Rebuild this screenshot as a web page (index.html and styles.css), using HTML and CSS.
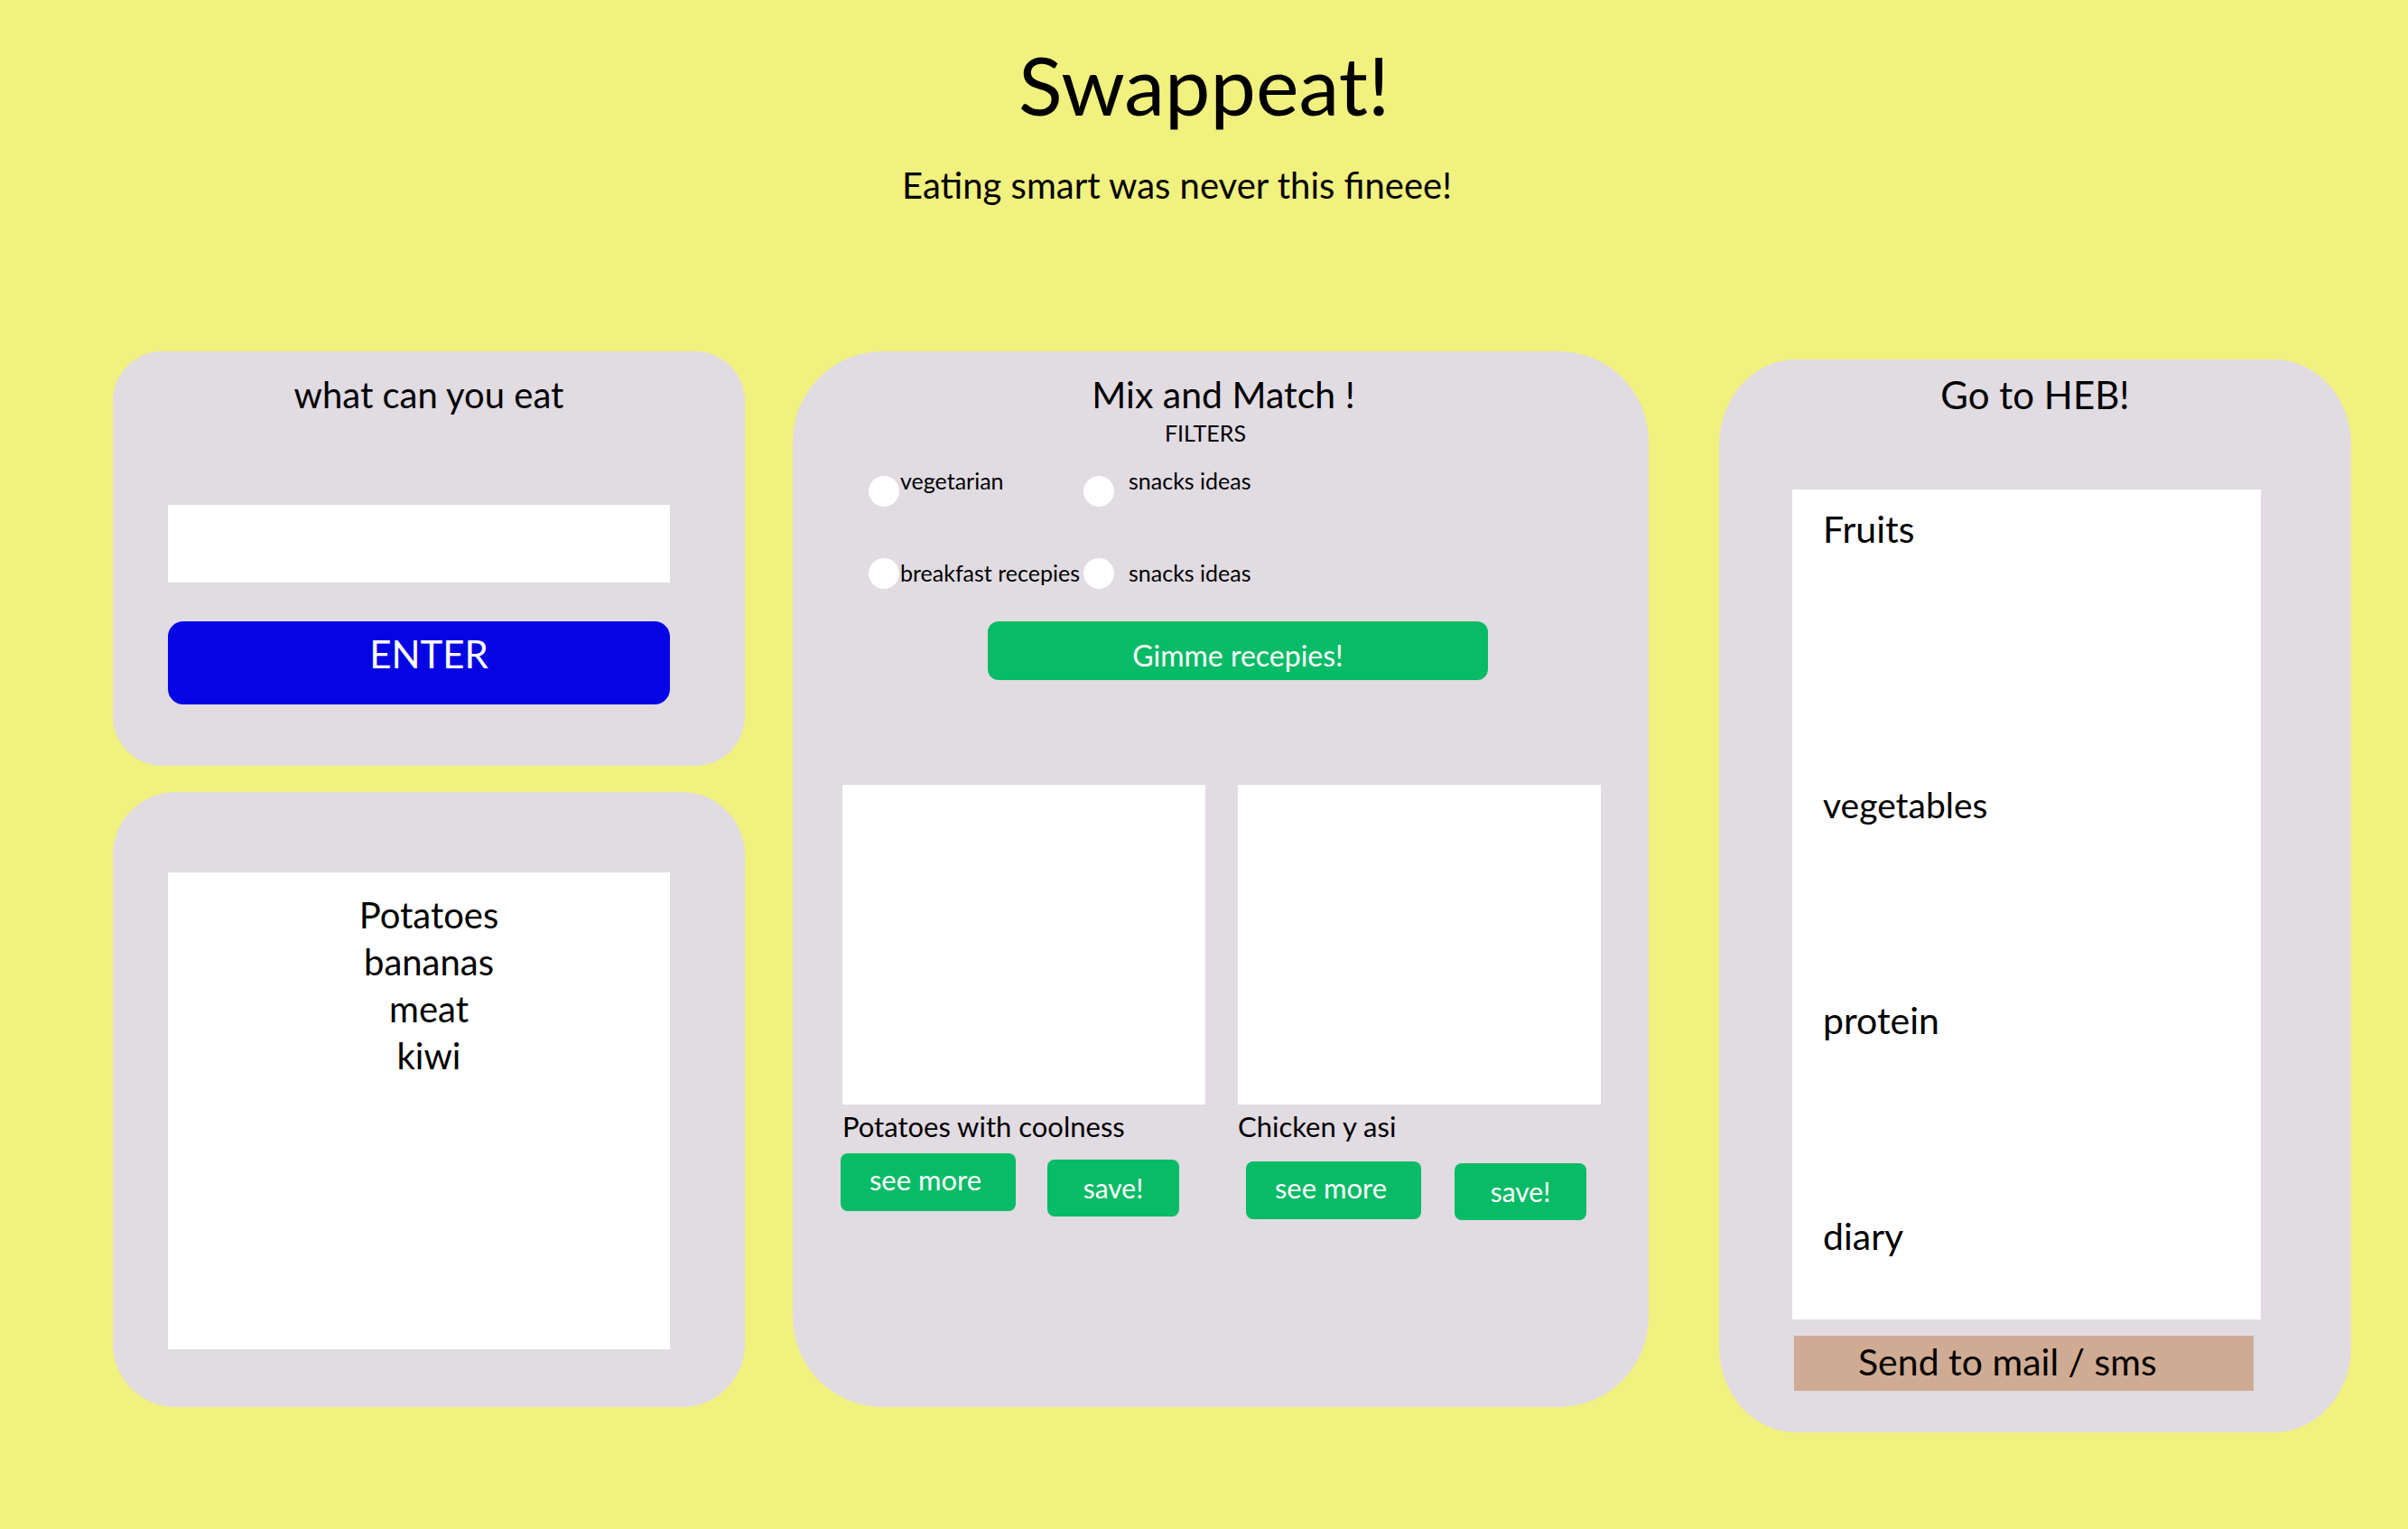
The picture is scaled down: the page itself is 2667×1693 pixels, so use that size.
FILE: index.html
```html
<!DOCTYPE html>
<html lang="en">
<head>
<meta charset="utf-8">
<title>Swappeat!</title>
<link rel="stylesheet" href="styles.css">
</head>
<body>
<header class="header">
  <h1 class="title">Swappeat!</h1>
  <p class="subtitle">Eating smart was never this fineee!</p>
</header>
<main class="board">
  <div class="col-left">
    <section class="panel panel-input">
      <h2 class="panel-title">what can you eat</h2>
      <div class="text-input"></div>
      <button class="enter-btn">ENTER</button>
    </section>
    <section class="panel panel-list">
      <div class="list-box">
        <div class="list-item">Potatoes</div>
        <div class="list-item">bananas</div>
        <div class="list-item">meat</div>
        <div class="list-item">kiwi</div>
      </div>
    </section>
  </div>
  <section class="panel panel-mix">
    <h2 class="panel-title mix-title">Mix and Match !</h2>
    <div class="filters-label">FILTERS</div>
    <div class="filters">
      <label class="filter row-1"><span class="radio"></span><span class="filter-text">vegetarian</span></label>
      <label class="filter row-1 filter-gap"><span class="radio"></span><span class="filter-text">snacks ideas</span></label>
      <label class="filter row-2"><span class="radio"></span><span class="filter-text">breakfast recepies</span></label>
      <label class="filter row-2 filter-gap"><span class="radio"></span><span class="filter-text">snacks ideas</span></label>
    </div>
    <button class="gimme-btn">Gimme recepies!</button>
    <div class="cards">
      <div class="card card-a">
        <div class="card-img"></div>
        <div class="card-caption">Potatoes with coolness</div>
        <div class="card-actions">
          <button class="green-btn more-btn">see more</button>
          <button class="green-btn save-btn">save!</button>
        </div>
      </div>
      <div class="card card-b">
        <div class="card-img"></div>
        <div class="card-caption">Chicken y asi</div>
        <div class="card-actions">
          <button class="green-btn more-btn">see more</button>
          <button class="green-btn save-btn">save!</button>
        </div>
      </div>
    </div>
  </section>
  <section class="panel panel-heb">
    <h2 class="panel-title heb-title">Go to HEB!</h2>
    <div class="heb-box">
      <div class="heb-item">Fruits</div>
      <div class="heb-item heb-veg">vegetables</div>
      <div class="heb-item heb-more">protein</div>
      <div class="heb-item heb-more">diary</div>
    </div>
    <button class="send-btn">Send to mail / sms</button>
  </section>
</main>
</body>
</html>
```
FILE: styles.css
```css
* { box-sizing: border-box; }

html, body {
  margin: 0;
  padding: 0;
}

body {
  width: 2667px;
  height: 1693px;
  background: #f1f17f;
  font-family: "Lato", "Open Sans", sans-serif;
  color: #000;
  overflow: hidden;
}

button {
  font-family: inherit;
  border: none;
  padding: 0;
  cursor: pointer;
}

.header {
  padding-top: 39px;
  text-align: center;
}

.title {
  margin: 0;
  font-size: 90px;
  font-weight: 400;
  line-height: 1.2;
}

.subtitle {
  margin: 34px 0 0;
  padding-right: 60px;
  font-size: 40px;
  line-height: 1.2;
}

.board {
  display: flex;
  align-items: flex-start;
  margin-top: 160px;
  padding-left: 125px;
}

.col-left {
  display: flex;
  flex-direction: column;
  gap: 29px;
  width: 700px;
}

.panel {
  background: #e1dbe2;
}

.panel-title {
  margin: 0;
  font-weight: 400;
  line-height: 1.2;
  text-align: center;
}

/* left top panel */
.panel-input {
  height: 459px;
  border-radius: 55px;
  padding-top: 24px;
}

.panel-input .panel-title {
  font-size: 40px;
}

.text-input {
  width: 556px;
  height: 86px;
  margin: 98px 0 0 61px;
  background: #fff;
}

.enter-btn {
  display: flex;
  align-items: flex-start;
  justify-content: center;
  width: 556px;
  height: 92px;
  margin: 43px 0 0 61px;
  padding: 11px 0 0 22px;
  background: #0505e4;
  color: #fff;
  border-radius: 17px;
  font-size: 42px;
  line-height: 1.2;
}

/* left bottom panel */
.panel-list {
  height: 681px;
  border-radius: 70px;
  padding-top: 89px;
}

.list-box {
  width: 556px;
  height: 528px;
  margin-left: 61px;
  padding: 21px 0 0 22px;
  background: #fff;
  text-align: center;
}

.list-item {
  font-size: 40px;
  line-height: 52px;
}

/* middle panel */
.panel-mix {
  width: 948px;
  height: 1169px;
  margin-left: 53px;
  border-radius: 100px;
  padding-top: 23px;
}

.mix-title {
  font-size: 41px;
  padding-left: 6px;
}

.filters-label {
  margin-top: 3px;
  padding-right: 34px;
  font-size: 25px;
  line-height: 30px;
  text-align: center;
}

.filters {
  display: grid;
  grid-template-columns: 238px auto;
  row-gap: 52px;
  margin: 27px 0 0 84px;
}

.filter {
  display: flex;
  align-items: flex-start;
  height: 39px;
}

.radio {
  flex: none;
  width: 34px;
  height: 34px;
  margin-top: 6px;
  border-radius: 50%;
  background: #fff;
}

.filter-text {
  margin-left: 1px;
  font-size: 25px;
  line-height: 30px;
  white-space: nowrap;
}

.row-1 .filter-text {
  margin-top: -4px;
}

.row-2 .filter-text {
  margin-top: 7px;
}

.filter-gap .filter-text {
  margin-left: 16px;
}

.gimme-btn {
  display: block;
  width: 554px;
  height: 65px;
  margin: 37px 0 0 216px;
  background: #08bb66;
  color: #fff;
  border-radius: 12px;
  font-size: 32px;
  line-height: 1;
  padding-top: 10px;
}

.cards {
  display: flex;
  gap: 36px;
  margin: 116px 0 0 55px;
}

.card {
  width: 402px;
}

.card-img {
  height: 354px;
  background: #fff;
}

.card-caption {
  margin-top: 6px;
  font-size: 31px;
  line-height: 36px;
  white-space: nowrap;
}

.card-actions {
  display: flex;
  align-items: flex-start;
  gap: 35px;
  margin: 12px 0 0 -2px;
}

.card-b .card-actions {
  margin: 21px 0 0 9px;
  gap: 37px;
}

.green-btn {
  background: #08bb66;
  color: #fff;
  border-radius: 8px;
  font-size: 30px;
  line-height: 1;
}

.more-btn {
  width: 194px;
  height: 64px;
  padding: 0 6px 6px 0;
  font-size: 31px;
}

.save-btn {
  width: 146px;
  height: 63px;
  margin-top: 7px;
  padding-bottom: 2px;
}

.card-b .save-btn {
  margin-top: 2px;
}

/* right panel */
.panel-heb {
  width: 700px;
  height: 1188px;
  margin: 9px 0 0 78px;
  border-radius: 85px / 95px;
  padding-top: 14px;
}

.heb-title {
  font-size: 42px;
}

.heb-box {
  width: 519px;
  height: 919px;
  margin: 80px 0 0 81px;
  padding: 20px 0 0 34px;
  background: #fff;
}

.heb-item {
  font-size: 41px;
  line-height: 48px;
}

.heb-veg {
  margin-top: 257px;
  font-size: 39px;
}

.heb-more {
  margin-top: 191px;
}

.send-btn {
  display: block;
  width: 509px;
  height: 61px;
  margin: 18px 0 0 83px;
  padding: 0 0 4px 71px;
  background: #d0ab94;
  color: #000;
  font-size: 41px;
  line-height: 57px;
  text-align: left;
}
```
